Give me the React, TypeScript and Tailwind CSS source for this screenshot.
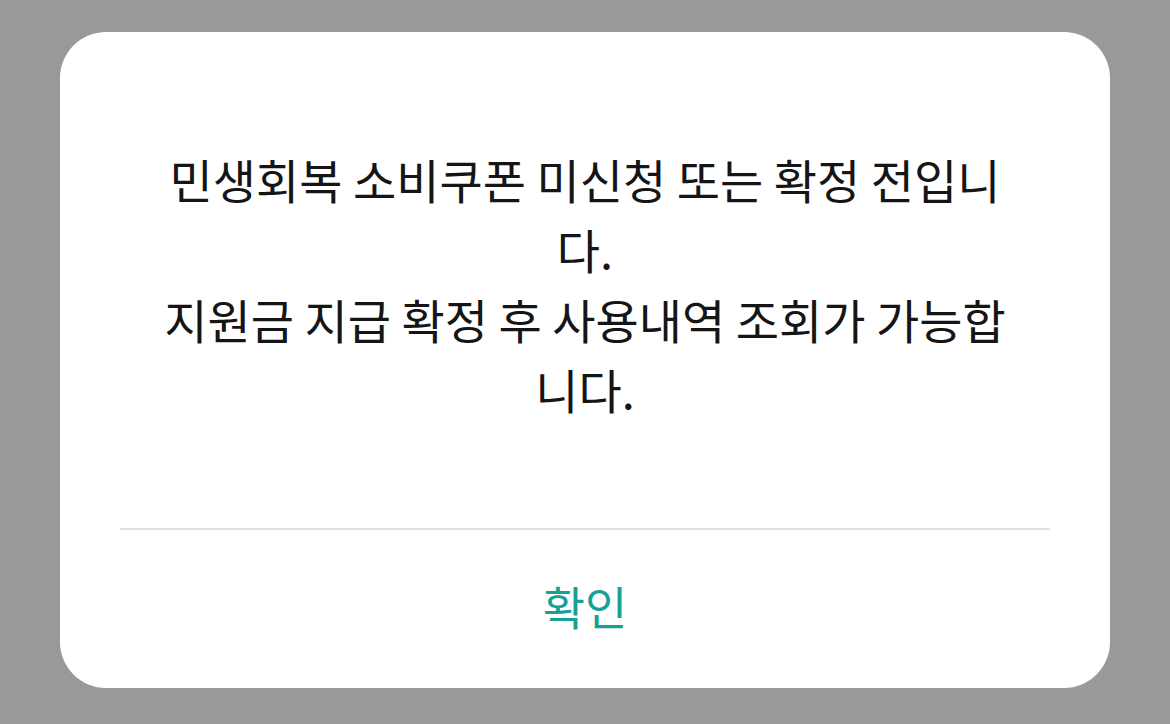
import React from 'react';

const lines = [
    '민생회복 소비쿠폰 미신청 또는 확정 전입니',
    '다.',
    '지원금 지급 확정 후 사용내역 조회가 가능합',
    '니다.',
];

const NoticeDialog: React.FC<{ onConfirm?: () => void }> = ({ onConfirm }) => {
    return (
        <div className="w-full h-[656px] bg-white rounded-[46px] flex flex-col">
            <div className="pt-[112px] px-[40px] text-center text-[47px] leading-[70px] text-[#151515]">
                {lines.map((line, i) => (
                    <p key={i}>{line}</p>
                ))}
            </div>

            <div className="mt-[104px] mx-[60px] h-[2px] bg-[#e2e2e2]" />

            <button
                type="button"
                onClick={onConfirm}
                className="flex-1 flex items-center justify-center pb-[8px] text-[46px] text-[#17a096]"
            >
                확인
            </button>
        </div>
    );
};

export default function App() {
    return (
        <div
            className="w-[1170px] h-[724px] bg-[#999999] pt-[32px] px-[60px]"
            style={{ fontFamily: '"Noto Sans CJK KR", "Noto Sans", sans-serif' }}
        >
            <NoticeDialog />
        </div>
    );
}
